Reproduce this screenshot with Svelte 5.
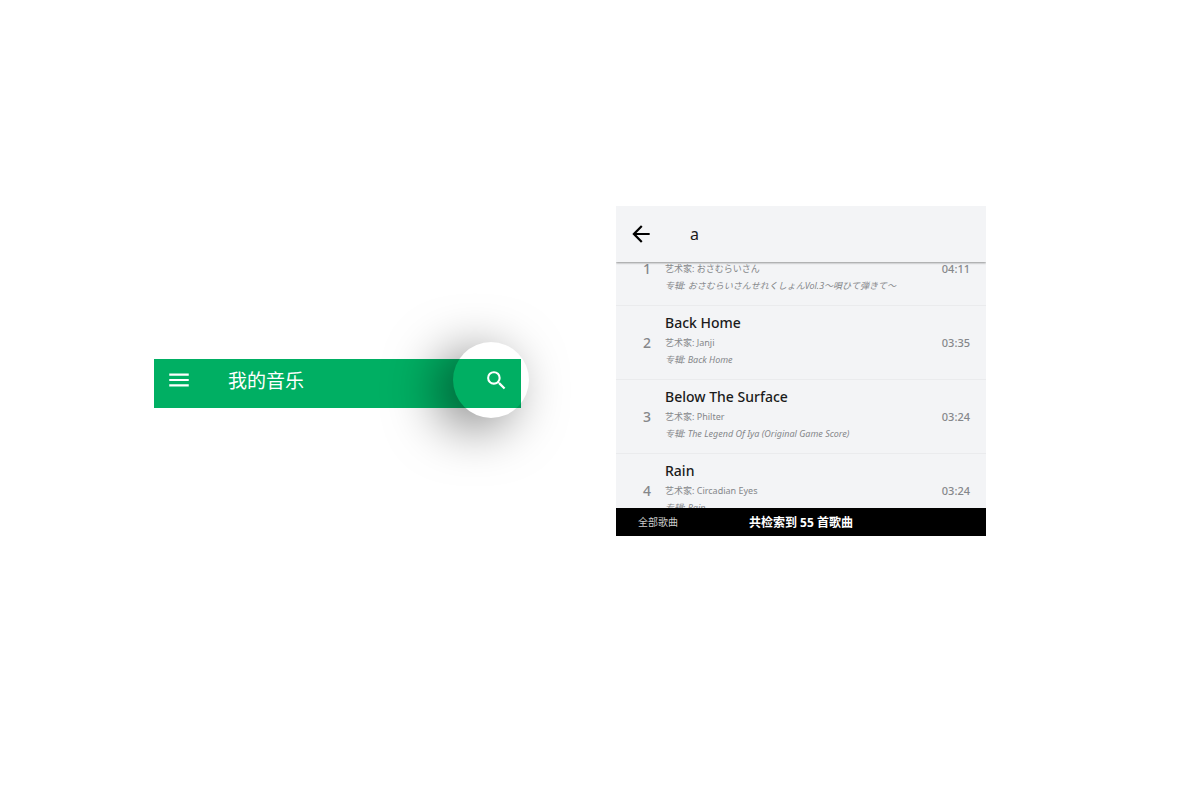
<script lang="ts">
	type Song = {
		title: string;
		artist: string;
		album: string;
		length: string;
	};

	const songs: Song[] = [
		{
			title: '',
			artist: 'おさむらいさん',
			album: 'おさむらいさんせれくしょんVol.3〜唄ひて弾きて〜',
			length: '04:11'
		},
		{ title: 'Back Home', artist: 'Janji', album: 'Back Home', length: '03:35' },
		{
			title: 'Below The Surface',
			artist: 'Philter',
			album: 'The Legend Of Iya (Original Game Score)',
			length: '03:24'
		},
		{ title: 'Rain', artist: 'Circadian Eyes', album: 'Rain', length: '03:24' }
	];

	const total = 55;
	let query = $state('a');
</script>

<main>
	<header class="toolbar">
		<button class="icon" aria-label="菜单">
			<svg viewBox="0 0 24 24" width="26" height="26">
				<path d="M3 18h18v-2H3v2zm0-5h18v-2H3v2zm0-7v2h18V6H3z" />
			</svg>
		</button>
		<h1>我的音乐</h1>
		<button class="spot" aria-label="搜索">
			<svg viewBox="0 0 24 24" width="25" height="25">
				<path
					d="M15.5 14h-.79l-.28-.27A6.471 6.471 0 0 0 16 9.5 6.5 6.5 0 1 0 9.5 16c1.61 0 3.09-.59 4.23-1.57l.27.28v.79l5 4.99L20.49 19l-4.99-5zm-6 0C7.01 14 5 11.99 5 9.5S7.01 5 9.5 5 14 7.01 14 9.5 11.99 14 9.5 14z"
				/>
			</svg>
		</button>
	</header>

	<section class="search">
		<div class="field">
			<button class="icon" aria-label="返回">
				<svg viewBox="0 0 24 24" width="26" height="26">
					<path d="M20 11H7.83l5.59-5.59L12 4l-8 8 8 8 1.41-1.41L7.83 13H20v-2z" />
				</svg>
			</button>
			<input type="text" aria-label="搜索歌曲" bind:value={query} />
		</div>
		<div class="results">
			<ol>
				{#each songs as song, i}
					<li>
						<span class="index">{i + 1}</span>
						<div class="info">
							<h2>{song.title}</h2>
							<p>艺术家: {song.artist}</p>
							<p class="album">专辑: {song.album}</p>
						</div>
						<time>{song.length}</time>
					</li>
				{/each}
			</ol>
		</div>
		<footer>
			<span>全部歌曲</span>
			<strong>共检索到 {total} 首歌曲</strong>
		</footer>
	</section>
</main>

<style>
	:global(body) {
		background: #fff;
	}

	main {
		display: grid;
		grid-template-columns: 367fr 370fr;
		column-gap: 95px;
		align-items: start;
		padding: 206px 193px 0 154px;
		font-family: 'Noto Sans', 'Noto Sans CJK SC', sans-serif;
	}

	h1,
	h2,
	p,
	ol {
		margin: 0;
		padding: 0;
		font-weight: 400;
	}

	button {
		padding: 0;
		border: none;
		background: none;
		cursor: pointer;
	}

	svg {
		display: block;
		fill: currentColor;
	}

	.toolbar {
		position: relative;
		display: flex;
		align-items: center;
		height: 49px;
		margin-top: 153px;
		padding-left: 12px;
		background: #00af63;
		color: #fff;
	}

	.toolbar .icon {
		margin-bottom: 8px;
		color: #fff;
	}

	h1 {
		margin: 0 0 6px 36px;
		font-size: 19px;
		line-height: 28px;
	}

	/* the bar shows through the highlight unshaded */
	.spot {
		position: absolute;
		top: -17px;
		right: -8px;
		display: flex;
		align-items: center;
		justify-content: flex-end;
		width: 76px;
		height: 76px;
		padding-right: 20px;
		border-radius: 50%;
		background: linear-gradient(#00af63, #00af63) 0 17px / 68px 49px no-repeat #fff;
		box-shadow: -16px 10px 52px rgba(0, 0, 0, 0.5);
		color: #fff;
	}

	.search {
		background: #f3f4f6;
	}

	.field {
		position: relative;
		z-index: 1;
		display: flex;
		align-items: center;
		height: 56px;
		padding-left: 12px;
		background: #f3f4f6;
		box-shadow: 0 1px 2px rgba(0, 0, 0, 0.4);
		clip-path: inset(0 0 -4px 0);
	}

	.field .icon {
		color: #000;
	}

	input {
		flex: 1;
		min-width: 0;
		margin-left: 36px;
		padding: 0;
		border: none;
		outline: none;
		background: none;
		color: #1b1b1b;
		font: 16px 'Noto Sans', 'Noto Sans CJK SC', sans-serif;
	}

	.results {
		height: 246px;
		overflow: hidden;
	}

	/* scrolled part of the way into the first song */
	ol {
		margin-top: -30px;
		list-style: none;
	}

	li {
		display: flex;
		align-items: center;
		box-sizing: border-box;
		height: 74px;
		padding: 0 16px 0 24px;
		border-bottom: 1px solid #eaebed;
		color: #85878a;
	}

	.index {
		width: 14px;
		margin-right: 11px;
		font-size: 14px;
		font-weight: 500;
		text-align: center;
	}

	.info {
		flex: 1;
		min-width: 0;
		padding-bottom: 5px;
		white-space: nowrap;
	}

	h2 {
		height: 22px;
		color: #1b1b1b;
		font-size: 14px;
		font-weight: 500;
		line-height: 22px;
	}

	p {
		font-size: 9px;
		line-height: 17px;
	}

	.album {
		font-style: italic;
	}

	time {
		font-size: 11px;
		font-weight: 500;
	}

	footer {
		display: grid;
		grid-template-columns: 1fr auto 1fr;
		align-items: center;
		height: 28px;
		padding: 0 22px;
		background: #000;
		color: #fff;
	}

	footer span {
		color: #ccc;
		font-size: 10px;
		line-height: 16px;
	}

	footer strong {
		font-size: 12px;
	}
</style>
